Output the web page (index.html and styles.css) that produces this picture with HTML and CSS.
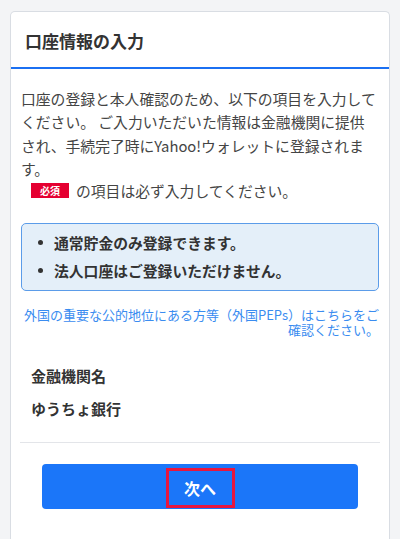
FILE: index.html
```html
<!DOCTYPE html>
<html lang="ja">
<head>
<meta charset="utf-8">
<title>口座情報の入力</title>
<link rel="stylesheet" href="styles.css">
</head>
<body>
<div class="page">
  <section class="card">
    <header class="card-header">
      <h1 class="card-title">口座情報の入力</h1>
    </header>
    <div class="card-body">
      <p class="intro">口座の登録と本人確認のため、以下の項目を入力してください。 ご入力いただいた情報は金融機関に提供され、手続完了時にYahoo!ウォレットに登録されます。</p>
      <div class="required-note"><span class="badge">必須</span><span>の項目は必ず入力してください。</span></div>
      <ul class="notice">
        <li>通常貯金のみ登録できます。</li>
        <li>法人口座はご登録いただけません。</li>
      </ul>
      <p class="peps"><a href="#" class="peps-link">外国の重要な公的地位にある方等（外国PEPs）はこちらをご確認ください。</a></p>
      <div class="field">
        <div class="field-label">金融機関名</div>
        <div class="field-value">ゆうちょ銀行</div>
      </div>
      <hr class="divider">
      <div class="actions">
        <button class="btn-next" type="button"><span class="btn-label">次へ</span></button>
      </div>
    </div>
  </section>
</div>
</body>
</html>
```

FILE: styles.css
```css
html, body {
  margin: 0;
  padding: 0;
}
body {
  background: #f3f4f6;
  font-family: "Noto Sans CJK JP", "Noto Sans", sans-serif;
  color: #3c3c3c;
}
.page {
  padding: 11px 10px 0 10px;
}
.card {
  background: #fff;
  border: 1px solid #d9dde3;
  border-radius: 5px 5px 0 0;
  border-bottom: none;
  min-height: 540px;
  box-sizing: border-box;
}
.card-header {
  height: 55px;
  border-bottom: 2px solid #1b70f2;
  display: flex;
  align-items: center;
  padding: 0 14px;
}
.card-title {
  margin: 0;
  font-size: 17px;
  font-weight: bold;
  color: #333;
  letter-spacing: 0;
  line-height: 1;
  padding-top: 1px;
}
.card-body {
  padding: 18px 10px 30px 10px;
}
.intro {
  margin: 0;
  font-size: 14.8px;
  line-height: 23.4px;
  color: #444;
}
.required-note {
  display: flex;
  align-items: center;
  height: 18px;
  margin-top: 1px;
  font-size: 14.8px;
  color: #444;
}
.badge {
  display: inline-flex;
  align-items: center;
  justify-content: center;
  width: 38px;
  height: 15px;
  margin-left: 10px;
  margin-right: 7px;
  background: #e50031;
  color: #fff;
  font-size: 10px;
  font-weight: bold;
  line-height: 1;
}
.notice {
  list-style: none;
  margin: 23px 0 0 0;
  padding: 5px 0;
  background: #e4eff9;
  border: 1px solid #5b9ce9;
  border-radius: 5px;
}
.notice li {
  display: flex;
  align-items: center;
  height: 28px;
  line-height: 28px;
  font-size: 14.8px;
  font-weight: bold;
  color: #333;
}
.notice li::before {
  content: "";
  width: 5px;
  height: 5px;
  border-radius: 50%;
  background: #333;
  margin-left: 16px;
  margin-right: 11px;
  flex: none;
}
.peps {
  margin: 16px 0 0 0;
  text-align: right;
  font-size: 13px;
  line-height: 15.6px;
}
.peps-link {
  color: #3a8cf0;
  text-decoration: none;
}
.field {
  padding: 0 10px;
  margin-top: 27px;
}
.field-label,
.field-value {
  font-size: 15px;
  font-weight: bold;
  color: #333;
  line-height: 22px;
}
.field-value {
  margin-top: 11px;
}
.divider {
  border: none;
  border-top: 1px solid #e3e5e9;
  margin: 22px -1px 0 -1px;
}
.actions {
  display: flex;
  justify-content: center;
  margin-top: 21px;
}
.btn-next {
  width: 316px;
  height: 45px;
  background: #1b76f9;
  border: none;
  border-radius: 4px;
  display: flex;
  align-items: center;
  justify-content: center;
  padding: 0;
  cursor: pointer;
  font-family: inherit;
}
.btn-label {
  display: inline-flex;
  align-items: center;
  justify-content: center;
  width: 69px;
  height: 40px;
  box-sizing: border-box;
  border: 3px solid #e8163f;
  color: #fff;
  font-size: 16px;
  font-weight: bold;
  margin-top: 3px;
}
```
